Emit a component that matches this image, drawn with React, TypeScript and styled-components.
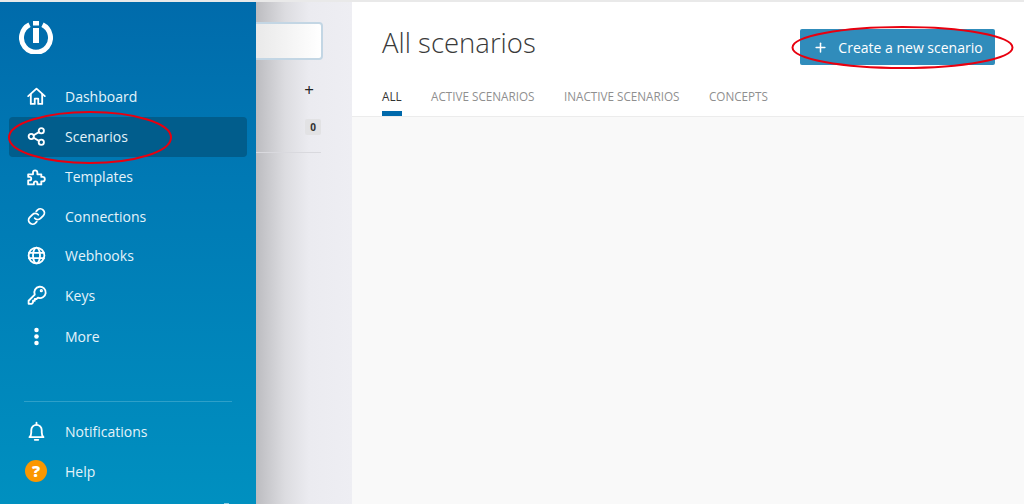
import React from "react";
import styled, { createGlobalStyle } from "styled-components";
import { Plus } from "lucide-react";

const navItems = [
  {
    label: "Dashboard",
    icon: (
      <>
        <path d="M2.5 11.500 12 3l9.500 8.500" />
        <path d="M5.500 9.500V20.500h4.500v-6h4v6h4.500V9.500" />
      </>
    ),
  },
  {
    label: "Scenarios",
    active: true,
    icon: (
      <>
        <circle cx="6" cy="12" r="3" />
        <circle cx="17.500" cy="5.500" r="3" />
        <circle cx="17.500" cy="18.500" r="3" />
        <path d="M8.700 10.600 14.800 7M8.700 13.400l6.100 3.600" />
      </>
    ),
  },
  {
    label: "Templates",
    icon: (
      <path d="M2.500 9.500h5.500V7.500a2.500 2.500 0 1 1 5 0v2h4.500v3h1.500a2.500 2.500 0 1 1 0 5h-1.500v3.500h-4.500v-1.500a2 2 0 1 0-4 0V21H2.500v-4.500h1.500a2 2 0 1 0 0-4H2.500V9.500Z" />
    ),
  },
  {
    label: "Connections",
    icon: (
      <>
        <path d="M10 14a4.500 4.500 0 0 0 6.600.2l3.200-3.200a4.600 4.600 0 0 0-6.500-6.500l-1.600 1.600" />
        <path d="M14 10a4.500 4.500 0 0 0-6.600-.2L4.200 13a4.600 4.600 0 0 0 6.500 6.500l1.600-1.600" />
      </>
    ),
  },
  {
    label: "Webhooks",
    icon: (
      <>
        <circle cx="12" cy="12" r="9" />
        <ellipse cx="12" cy="12" rx="4" ry="9" />
        <path d="M3.500 9h17M3.500 15h17" />
      </>
    ),
  },
  {
    label: "Keys",
    icon: (
      <>
        <path d="M10 10.900a6.500 6.500 0 1 1 3.600 3.600L12 16h-2v2H8v2l-1.500 1.500H3V18Z" />
        <circle cx="17.500" cy="6.500" r=".8" />
      </>
    ),
  },
  {
    label: "More",
    icon: (
      <>
        <circle cx="12" cy="4.500" r="2.600" fill="#fff" stroke="none" />
        <circle cx="12" cy="12" r="2.600" fill="#fff" stroke="none" />
        <circle cx="12" cy="19.500" r="2.600" fill="#fff" stroke="none" />
      </>
    ),
  },
];

const tabs = ["ALL", "ACTIVE SCENARIOS", "INACTIVE SCENARIOS", "CONCEPTS"];

export default function App() {
  return (
    <>
      <GlobalStyle />
      <Page>
        <Sidebar>
          <Logo viewBox="0 0 34 34">
            <path d="M10.500 4.800a14.500 14.500 0 1 0 13 0" fill="none" stroke="#fff" strokeWidth="5" />
            <rect x="14" y="1" width="6" height="4.500" fill="#fff" />
            <rect x="14" y="8" width="6" height="15" fill="#fff" />
          </Logo>
          <Nav>
            {navItems.map((item) => (
              <NavRow key={item.label} $active={item.active}>
                <NavIcon viewBox="0 0 24 24">{item.icon}</NavIcon>
                {item.label}
              </NavRow>
            ))}
          </Nav>
          <SideBottom>
            <NavRow>
              <NavIcon viewBox="0 0 24 24">
                <path d="M4 18.500c1.500-1.500 2-3 2-5.500v-2.500a6 6 0 0 1 12 0V13c0 2.500.5 4 2 5.500H4Z" />
                <path d="M10 21.500h4M12 2v2" />
              </NavIcon>
              Notifications
            </NavRow>
            <NavRow>
              <HelpBadge>?</HelpBadge>
              Help
            </NavRow>
          </SideBottom>
          <CollapseHint />
        </Sidebar>

        <Filters>
          <SearchBox />
          <FilterRow>
            <FilterPlus>+</FilterPlus>
          </FilterRow>
          <CountRow>
            <CountBadge>0</CountBadge>
          </CountRow>
        </Filters>

        <Main>
          <Header>
            <TitleRow>
              <Title>All scenarios</Title>
              <CreateButton>
                <Plus size={15} strokeWidth={2.400} />
                Create a new scenario
              </CreateButton>
            </TitleRow>
            <Tabs>
              {tabs.map((tab, i) => (
                <Tab key={tab} $active={i === 0}>
                  {tab}
                </Tab>
              ))}
            </Tabs>
          </Header>
          <Body />
        </Main>

        <Annotation viewBox="0 0 1024 504">
          <ellipse cx="90" cy="137.500" rx="81" ry="25.500" />
          <ellipse cx="902.500" cy="47.500" rx="110" ry="20.500" />
        </Annotation>
      </Page>
    </>
  );
}

const GlobalStyle = createGlobalStyle`
  html, body {
    margin: 0;
    height: 100%;
    overflow: hidden;
    font-family: "Open Sans", "Noto Sans", sans-serif;
  }
`;

const Page = styled.div`
  position: relative;
  display: flex;
  width: 1024px;
  height: 504px;
  padding-top: 2px;
  box-sizing: border-box;
  background: #e9e9e9;
  overflow: hidden;
`;

const Sidebar = styled.aside`
  position: relative;
  width: 256px;
  flex: none;
  display: flex;
  flex-direction: column;
  background: linear-gradient(180deg, #006bab 0%, #0079b4 35%, #0090c0 100%);
  padding: 18px 9px 0;
  box-sizing: border-box;
`;

const CollapseHint = styled.span`
  position: absolute;
  left: 224px;
  bottom: 0;
  width: 5px;
  height: 1px;
  background: #8ccde4;
`;

const Logo = styled.svg`
  width: 34px;
  height: 34px;
  margin-left: 10px;
  flex: none;
`;

const Nav = styled.nav`
  display: flex;
  flex-direction: column;
  margin-top: 23px;
`;

const NavRow = styled.div<{ $active?: boolean }>`
  display: flex;
  align-items: center;
  height: 39.750px;
  padding-left: 17px;
  gap: 18px;
  border-radius: 4px;
  color: #e4f3fa;
  font-size: 14px;
  background: ${(p) => (p.$active ? "#015d8c" : "transparent")};

  nav > &:last-child {
    margin-top: 1.500px;
  }
`;

const NavIcon = styled.svg`
  width: 21px;
  height: 21px;
  flex: none;
  fill: none;
  stroke: #fff;
  stroke-width: 2.100;
  stroke-linejoin: round;
  stroke-linecap: round;
`;

const SideBottom = styled.div`
  margin: auto 15px 13px;
  padding-top: 10px;
  border-top: 1px solid #2ea0c9;
  display: flex;
  flex-direction: column;

  ${NavRow} {
    margin: 0 -15px;
  }
`;

const HelpBadge = styled.span`
  width: 22px;
  height: 22px;
  border-radius: 50%;
  flex: none;
  margin-left: -1px;
  background: #fb9700;
  color: #fff;
  font-size: 16px;
  font-weight: 800;
  line-height: 22px;
  text-align: center;
`;

const Filters = styled.section`
  width: 96px;
  flex: none;
  display: flex;
  flex-direction: column;
  box-sizing: border-box;
  padding: 20px 29px 0 0;
  background: linear-gradient(90deg, #bcbcc0 0%, #dcdce0 30%, #ebebf0 55%, #eeeef3 100%);
`;

const SearchBox = styled.div`
  height: 38px;
  box-sizing: border-box;
  background: linear-gradient(90deg, #e9e9e9, #ffffff);
  border: 2px solid #c3d6e4;
  border-left: none;
  border-radius: 0 4px 4px 0;
`;

const FilterRow = styled.div`
  display: flex;
  justify-content: flex-end;
  padding: 20px 9px 0 0;
  height: 42px;
  box-sizing: border-box;
`;

const FilterPlus = styled.span`
  font-size: 17px;
  line-height: 20px;
  color: #222;
`;

const CountRow = styled.div`
  display: flex;
  justify-content: flex-end;
  margin-right: 2px;
  padding: 17px 0 17px;
  border-bottom: 1px solid #d9d9de;
`;

const CountBadge = styled.span`
  width: 16px;
  height: 16px;
  border-radius: 2px;
  background: #e2e2e4;
  color: #333;
  font-size: 10px;
  font-weight: 700;
  line-height: 16px;
  text-align: center;
`;

const Main = styled.main`
  flex: 1;
  display: flex;
  flex-direction: column;
  min-width: 0;
`;

const Header = styled.header`
  height: 115px;
  flex: none;
  box-sizing: border-box;
  background: #fff;
  border-bottom: 1px solid #ececec;
  padding: 0 29px 0 30px;
  display: flex;
  flex-direction: column;
`;

const TitleRow = styled.div`
  display: flex;
  justify-content: space-between;
  align-items: flex-start;
  height: 79px;
`;

const Title = styled.h1`
  margin: 21px 0 0;
  font-size: 27.500px;
  font-weight: 300;
  line-height: 40px;
  color: #3a3a3a;
`;

const CreateButton = styled.button`
  margin-top: 27px;
  width: 195px;
  height: 36px;
  border: none;
  border-radius: 2px;
  background: #308cbb;
  color: #fff;
  font-family: inherit;
  font-size: 14px;
  display: flex;
  align-items: center;
  justify-content: center;
  gap: 10px;
  padding: 0 0 0 1px;
`;

const Tabs = styled.div`
  display: flex;
  gap: 29.500px;
  flex: 1;
`;

const Tab = styled.div<{ $active?: boolean }>`
  height: 100%;
  box-sizing: border-box;
  padding-top: 6.500px;
  font-size: 11.700px;
  line-height: 16px;
  color: ${(p) => (p.$active ? "#333" : "#8f8f8f")};
  border-bottom: 5px solid ${(p) => (p.$active ? "#0069ab" : "transparent")};
`;

const Body = styled.div`
  flex: 1;
  background: #f9f9f9;
`;

const Annotation = styled.svg`
  position: absolute;
  inset: 0;
  width: 1024px;
  height: 504px;
  pointer-events: none;
  fill: none;
  stroke: #e8000f;
  stroke-width: 2;
`;
